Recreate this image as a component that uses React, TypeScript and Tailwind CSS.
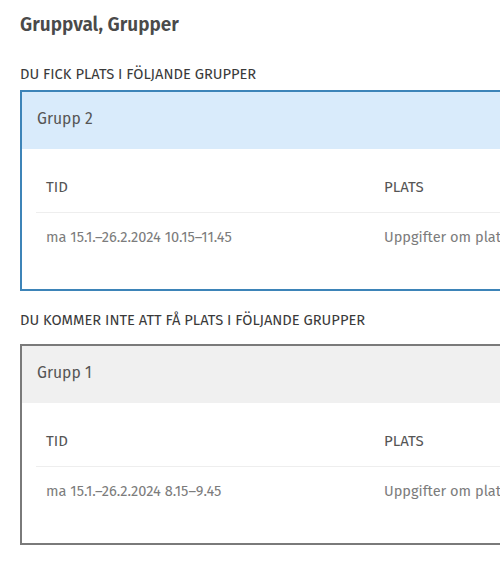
const GROUPS = [
  {
    label: "DU FICK PLATS I FÖLJANDE GRUPPER",
    name: "Grupp 2",
    time: "ma 15.1.–26.2.2024 10.15–11.45",
    boxClass: "border-[#3d84b8]",
    headClass: "bg-[#d9ebfb]",
  },
  {
    label: "DU KOMMER INTE ATT FÅ PLATS I FÖLJANDE GRUPPER",
    name: "Grupp 1",
    time: "ma 15.1.–26.2.2024 8.15–9.45",
    boxClass: "border-[#7a7a7a]",
    headClass: "bg-[#f0f0f0]",
  },
];

function GroupBox({ group }: { group: (typeof GROUPS)[number] }) {
  return (
    <div className={`w-[720px] border-2 ${group.boxClass}`}>
      {/* Header */}
      <div className={`flex h-[57px] items-center pb-[4px] pl-[15px] text-[15.7px] text-[#555] ${group.headClass}`}>
        {group.name}
      </div>

      {/* Table */}
      <div className="ml-[14px] mr-[14px] pb-[26px] pt-[13px]">
        <div className="grid h-[51px] grid-cols-[338px_1fr] items-center border-b border-[#eeeeee] px-[10px] text-[15px] text-[#555]">
          <span>TID</span>
          <span>PLATS</span>
        </div>
        <div className="grid h-[50px] grid-cols-[338px_1fr] items-center px-[10px] text-[14.6px] text-[#7c7c7c]">
          <span>{group.time}</span>
          <span className="whitespace-nowrap">Uppgifter om platsen saknas</span>
        </div>
      </div>
    </div>
  );
}

export default function App() {
  return (
    <div className="h-[571px] w-[500px] overflow-hidden bg-white pl-5 font-['Fira_Sans','Open_Sans',sans-serif]">
      <h2 className="pt-[12px] text-[19px] font-semibold leading-[26px] text-[#4a4a4a]">
        Gruppval, Grupper
      </h2>

      <p className="mt-[26px] text-[14.7px] leading-[20px] text-[#3a3a3a]">{GROUPS[0].label}</p>
      <div className="mt-[6px]">
        <GroupBox group={GROUPS[0]} />
      </div>

      <p className="mt-[19px] text-[14.7px] leading-[20px] text-[#3a3a3a]">{GROUPS[1].label}</p>
      <div className="mt-[14px]">
        <GroupBox group={GROUPS[1]} />
      </div>
    </div>
  );
}
